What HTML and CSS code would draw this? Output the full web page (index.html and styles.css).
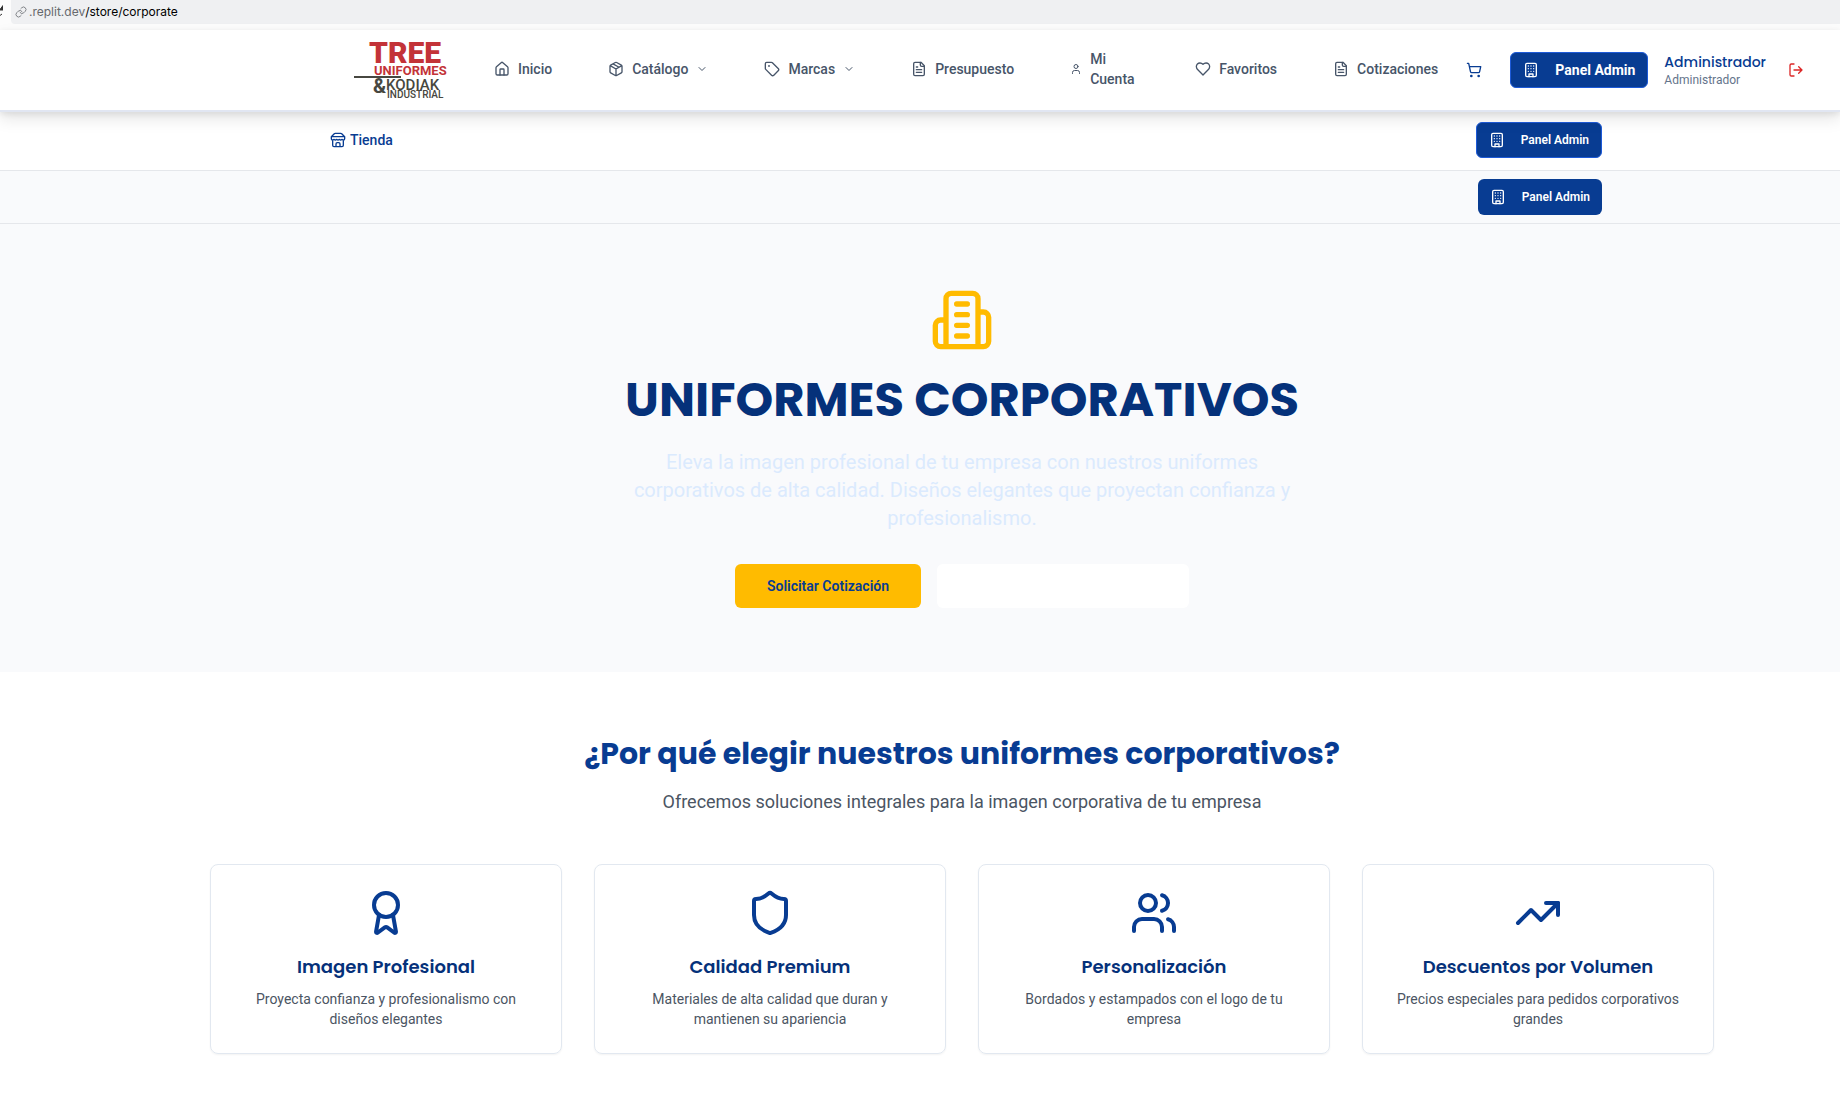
FILE: index.html
```html
<!DOCTYPE html>
<html lang="es">
<head>
<meta charset="utf-8">
<meta name="viewport" content="width=device-width, initial-scale=1">
<title>Uniformes Corporativos</title>
<link rel="stylesheet" href="styles.css">
</head>
<body>
<svg class="sprite" aria-hidden="true">
  <symbol id="building" viewBox="0 0 24 24"><rect width="16" height="20" x="4" y="2" rx="2"/><path d="M9 22v-4h6v4M8 6h.01M16 6h.01M12 6h.01M12 10h.01M12 14h.01M16 10h.01M16 14h.01M8 10h.01M8 14h.01"/></symbol>
  <symbol id="file" viewBox="0 0 24 24"><path d="M15 2H6a2 2 0 0 0-2 2v16a2 2 0 0 0 2 2h12a2 2 0 0 0 2-2V7Z"/><path d="M14 2v4a2 2 0 0 0 2 2h4M10 9H8M16 13H8M16 17H8"/></symbol>
  <symbol id="chevron" viewBox="0 0 24 24"><path d="m6 9 6 6 6-6"/></symbol>
</svg>

<div class="browser-bar">
  <svg class="reload" viewBox="0 0 3 14" aria-hidden="true"><path d="M0 4.500 3 .5V5H0ZM0 10.500 2 9"/></svg>
  <div class="address">
    <svg class="icon address-icon" viewBox="0 0 24 24" aria-hidden="true"><path d="M10 13a5 5 0 0 0 7.540.540l3-3a5 5 0 0 0-7.070-7.070l-1.720 1.710M14 11a5 5 0 0 0-7.540-.540l-3 3a5 5 0 0 0 7.070 7.070l1.710-1.710"/></svg>
    <span class="address-host">.replit.dev</span><span>/store/corporate</span>
  </div>
</div>

<header class="header">
  <a class="logo" href="#">
    <svg viewBox="0 0 94 60" role="img">
      <g class="logo-red"><text class="logo-tree" x="15" y="23">TREE</text><text class="logo-uniformes" x="20" y="35">UNIFORMES</text></g>
      <path class="logo-line" d="M0 37H47"/>
      <g class="logo-dark"><text class="logo-amp" x="19" y="53">&amp;</text><text class="logo-kodiak" x="32" y="50">KODIAK</text><text class="logo-industrial" x="33" y="58">INDUSTRIAL</text></g>
    </svg>
  </a>
  <nav class="nav">
    <a href="#"><svg class="icon" viewBox="0 0 24 24"><path d="M15 21v-8a1 1 0 0 0-1-1h-4a1 1 0 0 0-1 1v8"/><path d="M3 10a2 2 0 0 1 .709-1.528l7-5.999a2 2 0 0 1 2.582 0l7 5.999A2 2 0 0 1 21 10v9a2 2 0 0 1-2 2H5a2 2 0 0 1-2-2z"/></svg><span>Inicio</span></a>
    <a href="#"><svg class="icon" viewBox="0 0 24 24"><path d="m7.500 4.270 9 5.150M21 8a2 2 0 0 0-1-1.730l-7-4a2 2 0 0 0-2 0l-7 4A2 2 0 0 0 3 8v8a2 2 0 0 0 1 1.730l7 4a2 2 0 0 0 2 0l7-4A2 2 0 0 0 21 16ZM3.300 7l8.700 5 8.700-5M12 22V12"/></svg><span>Catálogo</span><svg class="icon icon-chevron"><use href="#chevron"/></svg></a>
    <a href="#"><svg class="icon" viewBox="0 0 24 24"><path d="M12.586 2.586A2 2 0 0 0 11.172 2H4a2 2 0 0 0-2 2v7.172a2 2 0 0 0 .586 1.414l8.704 8.704a2.426 2.426 0 0 0 3.420 0l6.580-6.580a2.426 2.426 0 0 0 0-3.420z"/><circle cx="7.500" cy="7.500" r=".5"/></svg><span>Marcas</span><svg class="icon icon-chevron"><use href="#chevron"/></svg></a>
    <a href="#"><svg class="icon"><use href="#file"/></svg><span>Presupuesto</span></a>
    <a class="nav-account" href="#"><svg class="icon icon-small" viewBox="0 0 24 24"><circle cx="12" cy="7" r="4"/><path d="M19 21v-2a4 4 0 0 0-4-4H9a4 4 0 0 0-4 4v2"/></svg><span>Mi Cuenta</span></a>
    <a href="#"><svg class="icon" viewBox="0 0 24 24"><path d="M19 14c1.490-1.460 3-3.210 3-5.500A5.500 5.500 0 0 0 16.500 3c-1.760 0-3 .5-4.500 2-1.500-1.500-2.740-2-4.500-2A5.500 5.500 0 0 0 2 8.500c0 2.300 1.500 4.050 3 5.500l7 7Z"/></svg><span>Favoritos</span></a>
    <a href="#"><svg class="icon"><use href="#file"/></svg><span>Cotizaciones</span></a>
  </nav>
  <div class="actions">
    <button class="icon-button cart" type="button"><svg class="icon" viewBox="0 0 24 24"><circle cx="8" cy="21" r="1"/><circle cx="19" cy="21" r="1"/><path d="M2.050 2.050h2l2.660 12.420a2 2 0 0 0 2 1.580h9.780a2 2 0 0 0 1.950-1.570l1.650-7.430H5.120"/></svg></button>
    <button class="admin admin-outlined admin-large" type="button"><svg class="icon"><use href="#building"/></svg>Panel Admin</button>
    <div class="user"><span class="user-name">Administrador</span><span class="user-role">Administrador</span></div>
    <button class="icon-button logout" type="button"><svg class="icon" viewBox="0 0 24 24"><path d="M9 21H5a2 2 0 0 1-2-2V5a2 2 0 0 1 2-2h4M16 17l5-5-5-5M21 12H9"/></svg></button>
  </div>
</header>

<div class="subbar">
  <div class="subbar-inner">
    <a class="store-link" href="#"><svg class="icon" viewBox="0 0 24 24"><path d="m2 7 4.410-4.410A2 2 0 0 1 7.830 2h8.340a2 2 0 0 1 1.420.590L22 7M4 12v8a2 2 0 0 0 2 2h12a2 2 0 0 0 2-2v-8M15 22v-4a2 2 0 0 0-2-2h-2a2 2 0 0 0-2 2v4M2 7h20M22 7v3a2 2 0 0 1-2 2 2.700 2.700 0 0 1-1.590-.630.700.700 0 0 0-.820 0A2.700 2.700 0 0 1 16 12a2.700 2.700 0 0 1-1.590-.630.700.700 0 0 0-.820 0A2.700 2.700 0 0 1 12 12a2.700 2.700 0 0 1-1.590-.630.700.700 0 0 0-.820 0A2.700 2.700 0 0 1 8 12a2.700 2.700 0 0 1-1.590-.630.700.700 0 0 0-.820 0A2.700 2.700 0 0 1 4 12a2 2 0 0 1-2-2V7"/></svg>Tienda</a>
    <button class="admin admin-outlined" type="button"><svg class="icon"><use href="#building"/></svg>Panel Admin</button>
  </div>
</div>
<div class="subbar subbar-muted">
  <div class="subbar-inner">
    <button class="admin" type="button"><svg class="icon"><use href="#building"/></svg>Panel Admin</button>
  </div>
</div>

<main>
  <section class="hero">
    <svg class="icon hero-icon" viewBox="0 0 24 24"><path d="M6 22V4a2 2 0 0 1 2-2h8a2 2 0 0 1 2 2v18ZM6 12H4a2 2 0 0 0-2 2v6a2 2 0 0 0 2 2h2M18 9h2a2 2 0 0 1 2 2v9a2 2 0 0 1-2 2h-2M10 6h4M10 10h4M10 14h4M10 18h4"/></svg>
    <h1>UNIFORMES CORPORATIVOS</h1>
    <p>Eleva la imagen profesional de tu empresa con nuestros uniformes corporativos de alta calidad. Diseños elegantes que proyectan confianza y profesionalismo.</p>
    <div class="hero-actions">
      <button class="cta" type="button">Solicitar Cotización</button>
      <button class="cta cta-white" type="button"></button>
    </div>
  </section>

  <section class="benefits">
    <h2>¿Por qué elegir nuestros uniformes corporativos?</h2>
    <p class="benefits-lead">Ofrecemos soluciones integrales para la imagen corporativa de tu empresa</p>
    <div class="cards">
      <article class="card">
        <svg class="icon card-icon" viewBox="0 0 24 24"><path d="m15.477 12.890 1.515 8.526a.5.5 0 0 1-.810.470l-3.580-2.687a1 1 0 0 0-1.197 0l-3.586 2.686a.5.5 0 0 1-.810-.469l1.514-8.526"/><circle cx="12" cy="8" r="6"/></svg>
        <h3>Imagen Profesional</h3>
        <p>Proyecta confianza y profesionalismo con diseños elegantes</p>
      </article>
      <article class="card">
        <svg class="icon card-icon" viewBox="0 0 24 24"><path d="M20 13c0 5-3.500 7.500-7.660 8.950a1 1 0 0 1-.670-.010C7.500 20.500 4 18 4 13V6a1 1 0 0 1 1-1c2 0 4.500-1.200 6.240-2.720a1.170 1.170 0 0 1 1.520 0C14.510 3.810 17 5 19 5a1 1 0 0 1 1 1z"/></svg>
        <h3>Calidad Premium</h3>
        <p>Materiales de alta calidad que duran y mantienen su apariencia</p>
      </article>
      <article class="card">
        <svg class="icon card-icon" viewBox="0 0 24 24"><path d="M16 21v-2a4 4 0 0 0-4-4H6a4 4 0 0 0-4 4v2M22 21v-2a4 4 0 0 0-3-3.870M16 3.130a4 4 0 0 1 0 7.750"/><circle cx="9" cy="7" r="4"/></svg>
        <h3>Personalización</h3>
        <p>Bordados y estampados con el logo de tu empresa</p>
      </article>
      <article class="card">
        <svg class="icon card-icon" viewBox="0 0 24 24"><path d="m22 7-8.500 8.500-5-5L2 17"/><path d="M16 7h6v6"/></svg>
        <h3>Descuentos por Volumen</h3>
        <p>Precios especiales para pedidos corporativos grandes</p>
      </article>
    </div>
  </section>
</main>
</body>
</html>
```
FILE: styles.css
```css
:root {
  --blue: #083c92;
  --navy: #05317a;
  --yellow: #ffbb00;
  --slate: #475569;
  --line: #e5e7eb;
  --muted-bg: #f9fafc;
  --center-shift: 84px;
  --display: Poppins, Inter, sans-serif;
}

* { box-sizing: border-box; }

body {
  margin: 0;
  background: #fff;
  color: #4b5563;
  font: 14px/20px Roboto, sans-serif;
  overflow-x: hidden;
}

h1, h2, h3, p { margin: 0; }
h1, h2, h3, .user-name { font-family: var(--display); }
a { color: inherit; text-decoration: none; }
button { border: 0; padding: 0; font: inherit; cursor: pointer; }

.sprite { display: none; }

.icon {
  width: 16px;
  height: 16px;
  flex: none;
  fill: none;
  stroke: currentColor;
  stroke-width: 2;
  stroke-linecap: round;
  stroke-linejoin: round;
}
.icon-chevron { width: 12px; height: 12px; }
.icon-small { width: 12px; height: 12px; }

/* Browser address bar */
.browser-bar {
  display: flex;
  gap: 8px;
  padding-bottom: 6px;
  background: #fcfcfc;
}
.reload { width: 3px; height: 14px; margin-top: 5px; stroke: #333; fill: #333; }
.address {
  flex: 1;
  display: flex;
  align-items: center;
  height: 24px;
  padding-left: 4px;
  border-radius: 0 0 0 4px;
  background: #eff0f2;
  color: #000;
  font: 12px/24px Inter, sans-serif;
}
.address-icon { width: 12px; height: 12px; margin-right: 2px; color: #808387; }
.address-host { color: #66696d; }

/* Header */
.header {
  position: relative;
  display: flex;
  align-items: center;
  height: 82px;
  padding: 0 36px 0 354px;
  border-bottom: 2px solid #e1e6f2;
  background: #fff;
  box-shadow: 0 7px 15px rgb(0 0 0 / 10%), 0 2px 6px rgb(0 0 0 / 8%);
}
.logo { flex: none; margin-right: 46px; }
.logo svg { display: block; width: 94px; height: 60px; overflow: visible; }
.logo text { font-family: Roboto, sans-serif; font-weight: 700; }
.logo-red { fill: #c33338; }
.logo-dark { fill: #474740; }
.logo .logo-tree { font-size: 30px; font-weight: 900; }
.logo-uniformes { font-size: 13px; }
.logo-amp { font-size: 20px; }
.logo .logo-kodiak { font-size: 15px; font-weight: 500; }
.logo .logo-industrial { font-size: 10px; font-weight: 500; }
.logo-line { stroke: #474740; stroke-width: 2; }

.nav {
  display: flex;
  align-items: center;
  gap: 56px;
  padding-bottom: 2px;
  color: var(--slate);
  font-weight: 500;
}
.nav a { display: flex; align-items: center; gap: 8px; }
.nav-account span { width: 49px; }

.actions { display: flex; align-items: center; margin-left: auto; }
.icon-button { display: flex; background: none; }
.cart { margin-right: 28px; color: var(--blue); }
.logout { margin-left: 22px; color: #dc2626; }
.user { display: flex; flex-direction: column; margin-left: 16px; }
.user-name { color: var(--blue); font-size: 14px; font-weight: 500; line-height: 20px; }
.user-role { color: #64748b; font-size: 12px; line-height: 16px; }

.admin {
  display: flex;
  align-items: center;
  gap: 16px;
  height: 36px;
  padding: 0 12px;
  border-radius: 6px;
  background: var(--blue);
  color: #fff;
  font-size: 12px;
  font-weight: 600;
  white-space: nowrap;
}
.admin-outlined { border: 1px solid #1d5ad8; }
.admin-large { font-size: 14px; font-weight: 700; }

/* Secondary bars */
.subbar {
  padding: 10px 0 12px var(--center-shift);
  border-bottom: 1px solid var(--line);
}
.subbar-muted { padding-top: 8px; padding-bottom: 8px; background: var(--muted-bg); }
.subbar-inner { display: flex; align-items: center; max-width: 1280px; margin: 0 auto; }
.subbar .admin { margin-left: auto; }
.store-link {
  display: flex;
  align-items: center;
  gap: 4px;
  padding-left: 8px;
  color: var(--blue);
  font-weight: 500;
}

/* Hero */
.hero {
  display: flex;
  flex-direction: column;
  align-items: center;
  padding: 64px 0 64px var(--center-shift);
  background: var(--muted-bg);
  text-align: center;
}
.hero-icon { width: 64px; height: 64px; color: var(--yellow); }
.hero h1 {
  margin: 16px 0;
  color: var(--navy);
  font-size: 48px;
  font-weight: 700;
  line-height: 64px;
}
.hero p { max-width: 672px; color: #dbeafe; font-size: 20px; line-height: 28px; }
.hero-actions { display: flex; gap: 16px; margin-top: 32px; }
.cta {
  height: 44px;
  padding: 0 32px;
  border-radius: 6px;
  background: var(--yellow);
  color: var(--blue);
  font-weight: 600;
}
.cta-white { width: 252px; background: #fff; }

/* Benefits */
.benefits { padding: 64px 0 44px var(--center-shift); text-align: center; }
.benefits h2 { color: var(--blue); font-size: 30px; font-weight: 700; line-height: 36px; }
.benefits-lead { margin: 16px 0 48px; font-size: 18px; line-height: 28px; }
.cards {
  display: grid;
  grid-template-columns: repeat(4, 1fr);
  gap: 32px;
  max-width: 1504px;
  margin: 0 auto;
}
.card {
  padding: 24px;
  border: 1px solid #e2e8f0;
  border-radius: 8px;
  box-shadow: 0 1px 2px rgb(0 0 0 / 5%);
}
.card-icon { display: block; width: 48px; height: 48px; margin: 0 auto 16px; color: var(--blue); }
.card h3 { margin-bottom: 8px; color: var(--navy); font-size: 18px; font-weight: 600; line-height: 28px; }
```
